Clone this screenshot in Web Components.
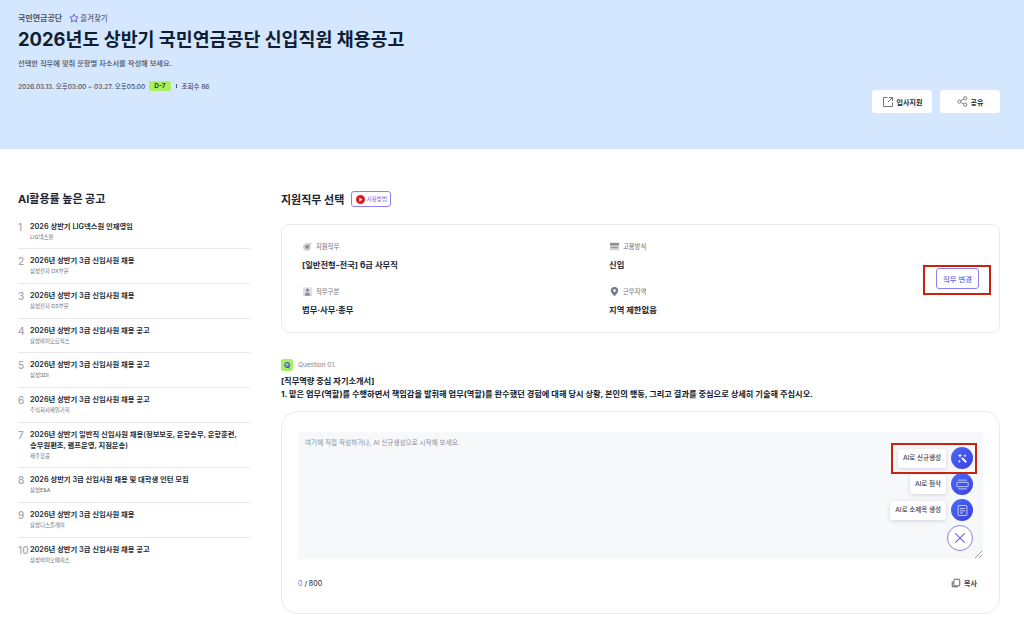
<!DOCTYPE html>
<html lang="ko">
<head>
<meta charset="utf-8">
<title>지원직무 선택</title>
<style>
  html, body { margin: 0; background: #fff; overflow: hidden; }
  body { font-family: Inter, "Noto Sans CJK KR", sans-serif; color: #1b2533; }
  .page { display: flex; gap: 31px; padding: 0 24px 0 18px; }
</style>
</head>
<body>
<job-hero></job-hero>
<div class="page">
  <rank-list title="AI활용률 높은 공고">
    <rank-item no="1" title="2026 상반기 LIG넥스원 인재영입" sub="LIG넥스원"></rank-item>
    <rank-item no="2" title="2026년 상반기 3급 신입사원 채용" sub="삼성전자 DX부문"></rank-item>
    <rank-item no="3" title="2026년 상반기 3급 신입사원 채용" sub="삼성전자 DS부문"></rank-item>
    <rank-item no="4" title="2026년 상반기 3급 신입사원 채용 공고" sub="삼성바이오로직스"></rank-item>
    <rank-item no="5" title="2026년 상반기 3급 신입사원 채용 공고" sub="삼성SDI"></rank-item>
    <rank-item no="6" title="2026년 상반기 3급 신입사원 채용 공고" sub="주식회사제일기획"></rank-item>
    <rank-item no="7" title="2026년 상반기 일반직 신입사원 채용(정보보호, 운항승무, 운항훈련, 승무원편조, 램프운영, 지점운송)" sub="제주항공"></rank-item>
    <rank-item no="8" title="2026 상반기 3급 신입사원 채용 및 대학생 인턴 모집" sub="삼성E&amp;A"></rank-item>
    <rank-item no="9" title="2026년 상반기 3급 신입사원 채용" sub="삼성디스플레이"></rank-item>
    <rank-item no="10" title="2026년 상반기 3급 신입사원 채용 공고" sub="삼성바이오에피스" last></rank-item>
  </rank-list>
  <main style="flex:1;min-width:0;display:block">
    <job-select></job-select>
    <question-card></question-card>
  </main>
</div>

<script>
// --- hero at the top of the page ---
class JobHero extends HTMLElement {
  constructor() {
    super();
    this.attachShadow({ mode: 'open' });
    this.shadowRoot.innerHTML = `
      <style>
        :host { display: flex; justify-content: space-between; align-items: flex-end; height: 149px; box-sizing: border-box; padding: 11px 24px 36px 18px; background: #d5e6ff; }
        .left { align-self: flex-start; }
        .org { display: flex; align-items: center; height: 13px; font-size: 8px; font-weight: 600; color: #4a5260; }
        .fav { display: flex; align-items: center; gap: 1px; margin-left: 7px; font-size: 7.5px; font-weight: 500; color: #5b6370; }
        h1 { margin: 1px 0 0; font-size: 18.4px; line-height: 28px; font-weight: 700; color: #0f1f33; }
        p { margin: 5px 0 0; font-size: 7.25px; line-height: 12px; font-weight: 500; color: #4a5260; }
        .meta { display: flex; align-items: center; margin-top: 10px; height: 12px; font-size: 6.5px; font-weight: 500; color: #4a5260; }
        .d { margin-left: 4px; padding: 0 5px; height: 10px; line-height: 10px; border-radius: 2px; background: #a9f060; color: #2a4a12; font-weight: 700; font-size: 6.5px; }
        .sep { width: 1px; height: 4px; background: #555; margin: 0 5px; }
        .btns { display: flex; gap: 8px; }
        button { all: unset; box-sizing: border-box; width: 60px; height: 23px; display: flex; align-items: center; justify-content: center; gap: 3px; background: #fff; border-radius: 3px; font-size: 7px; font-weight: 700; color: #222a36; }
        svg { display: block; }
      </style>
      <div class="left">
        <div class="org">국민연금공단
          <span class="fav">
            <svg width="10" height="10" viewBox="0 0 24 24" fill="none" stroke="#6a5cf0" stroke-width="2.4" stroke-linejoin="round"><path d="M12 2.5l3 6.4 7 .9-5.2 4.8 1.4 7-6.2-3.5-6.2 3.5 1.4-7L2 9.8l7-.9z"/></svg>
            즐겨찾기
          </span>
        </div>
        <h1>2026년도 상반기 국민연금공단 신입직원 채용공고</h1>
        <p>선택한 직무에 맞춰 문항별 자소서를 작성해 보세요.</p>
        <div class="meta">2026.03.13. 오후03:00 ~ 03.27. 오후05:00<span class="d">D-7</span><span class="sep"></span>조회수 86</div>
      </div>
      <div class="btns">
        <button>
          <svg width="12" height="12" viewBox="0 0 24 24" fill="none" stroke="#666" stroke-width="1.8"><path d="M11 3H3v18h18v-8"/><path d="M14 3h7v7M21 3l-9 9"/></svg>
          입사지원
        </button>
        <button>
          <svg width="11" height="11" viewBox="0 0 24 24" fill="none" stroke="#666" stroke-width="1.8"><circle cx="5" cy="12" r="3.5"/><circle cx="18" cy="5" r="3.5"/><circle cx="18" cy="19" r="3.5"/><path d="M8 10.3l7-3.8M8 13.7l7 3.8"/></svg>
          공유
        </button>
      </div>`;
  }
}
customElements.define('job-hero', JobHero);

// --- left column ---
class RankList extends HTMLElement {
  constructor() {
    super();
    this.attachShadow({ mode: 'open' });
  }
  connectedCallback() {
    this.shadowRoot.innerHTML = `
      <style>
        :host { display: block; width: 232px; flex: none; padding-top: 41px; }
        h2 { margin: 0 0 6.5px; font-size: 11px; line-height: 18px; font-weight: 700; color: #1b2533; }
      </style>
      <h2>${this.getAttribute('title')}</h2>
      <slot></slot>`;
  }
}
customElements.define('rank-list', RankList);

class RankItem extends HTMLElement {
  constructor() {
    super();
    this.attachShadow({ mode: 'open' });
  }
  connectedCallback() {
    const title = this.getAttribute('title');
    const sub = this.getAttribute('sub');
    this.shadowRoot.innerHTML = `
      <style>
        :host { display: flex; box-sizing: border-box; padding: 4px 0 5.7px; border-bottom: 1px solid #e6e8f0; }
        :host([last]) { border-bottom: 0; }
        .no { width: 12px; flex: none; font-size: 10px; line-height: 16px; color: #a4a8b0; font-weight: 500; white-space: nowrap; }
        .t { font-size: 7.3px; line-height: 11px; padding: 2px 0 0; font-weight: 600; color: #222a36; word-break: keep-all; }
        .s { font-size: 5.4px; line-height: 11px; color: #6a7078; }
      </style>
      <span class="no">${this.getAttribute('no')}</span>
      <div><div class="t">${title}</div><div class="s">${sub}</div></div>`;
  }
}
customElements.define('rank-item', RankItem);

// --- selected job card ---
const JOB_ICONS = {
  target: '<circle cx="11" cy="13" r="9" fill="#d5d7dd"/><circle cx="11" cy="13" r="4.5" fill="#8a8f9a"/><path d="M13 11l7-7" stroke="#8a8f9a" stroke-width="2"/>',
  cal: '<rect x="2" y="4" width="20" height="6" fill="#8a8f9a"/><rect x="2" y="11" width="20" height="9" fill="#c9ccd4"/><rect x="5" y="13" width="14" height="2" fill="#8a8f9a"/>',
  person: '<rect x="2" y="3" width="20" height="19" fill="#dfe1e7"/><circle cx="12" cy="9" r="3.5" fill="#8a8f9a"/><path d="M6 21c0-5 3-7 6-7s6 2 6 7z" fill="#8a8f9a"/>',
  pin: '<path d="M12 2a8 8 0 0 0-8 8c0 5.5 8 12.5 8 12.5s8-7 8-12.5a8 8 0 0 0-8-8z" fill="#777c86"/><circle cx="12" cy="10" r="3" fill="#fff"/>'
};

class JobField extends HTMLElement {
  constructor() {
    super();
    this.attachShadow({ mode: 'open' });
  }
  connectedCallback() {
    this.shadowRoot.innerHTML = `
      <style>
        :host { display: block; }
        .l { display: flex; align-items: center; gap: 3px; height: 12px; font-size: 6.3px; font-weight: 500; color: #7c818a; }
        .v { margin-top: 7px; font-size: 8.3px; line-height: 12px; font-weight: 700; color: #1b2533; }
        svg { display: block; }
      </style>
      <div class="l"><svg width="11" height="11" viewBox="0 0 24 24">${JOB_ICONS[this.getAttribute('icon')]}</svg>${this.getAttribute('label')}</div>
      <div class="v">${this.getAttribute('value')}</div>`;
  }
}
customElements.define('job-field', JobField);

class JobSelect extends HTMLElement {
  constructor() {
    super();
    this.attachShadow({ mode: 'open' });
    this.shadowRoot.innerHTML = `
      <style>
        :host { display: block; padding-top: 41px; }
        .head { display: flex; align-items: center; gap: 7px; height: 18px; }
        h2 { margin: 0; font-size: 11px; font-weight: 700; color: #1b2533; }
        .how { display: flex; align-items: center; gap: 2px; box-sizing: border-box; width: 40px; height: 16px; justify-content: center; border: 1px solid #8d7ff5; border-radius: 3px; font-size: 5.5px; color: #6a5cf0; }
        .card { position: relative; display: grid; grid-template-columns: 307px 1fr; row-gap: 14px; align-content: start; box-sizing: border-box; height: 109px; margin-top: 16px; padding: 15px 20px; border: 1px solid #e9ebf3; border-radius: 8px; background: #fff; }
        .change { position: absolute; left: 654px; top: 43px; box-sizing: border-box; width: 43px; height: 21px; display: flex; align-items: center; justify-content: center; border: 1px solid #8d7ff5; border-radius: 3px; background: #fff; font-size: 7.3px; color: #6a5cf0; font-weight: 500; }
        .mark { position: absolute; left: 641px; top: 40px; box-sizing: border-box; width: 68px; height: 30px; border: 2px solid #c8230f; }
        svg { display: block; }
      </style>
      <div class="head">
        <h2>지원직무 선택</h2>
        <span class="how">
          <svg width="9" height="9" viewBox="0 0 24 24"><circle cx="12" cy="12" r="12" fill="#e01b24"/><path d="M9 7l8 5-8 5z" fill="#fff"/></svg>
          사용방법
        </span>
      </div>
      <div class="card">
        <job-field icon="target" label="지원직무" value="[일반전형-전국] 6급 사무직"></job-field>
        <job-field icon="cal" label="고용방식" value="신입"></job-field>
        <job-field icon="person" label="직무구분" value="법무·사무·총무"></job-field>
        <job-field icon="pin" label="근무지역" value="지역 제한없음"></job-field>
        <span class="change">직무 변경</span>
        <span class="mark"></span>
      </div>`;
  }
}
customElements.define('job-select', JobSelect);

// --- floating AI action ---
class AiAction extends HTMLElement {
  constructor() {
    super();
    this.attachShadow({ mode: 'open' });
  }
  connectedCallback() {
    const icons = {
      wand: '<path d="M11 11l7 7" stroke="#fff" stroke-width="3"/><path d="M8 4l1 2.500 2.500 1-2.500 1-1 2.500-1-2.500-2.500-1 2.500-1zM16 5l.8 1.700 1.700.8-1.700.8-.8 1.700-.8-1.700-1.700-.8 1.700-.8zM7 14l.8 1.700 1.700.8-1.700.8-.8 1.700-.8-1.700-1.700-.8 1.700-.8z" fill="#fff"/>',
      form: '<path d="M5 5h14M5 19h14" stroke="#dfe3ff" stroke-width="1.300"/><rect x="3" y="8.500" width="18" height="7" rx=".5" fill="none" stroke="#dfe3ff" stroke-width="1.300"/>',
      doc: '<rect x="5" y="4" width="14" height="16" rx="1" fill="none" stroke="#dfe3ff" stroke-width="1.300"/><path d="M8 9h8M8 12.500h8M8 16h5" stroke="#dfe3ff" stroke-width="1.300"/>'
    };
    this.shadowRoot.innerHTML = `
      <style>
        :host { display: flex; align-items: center; justify-content: flex-end; gap: 5px; }
        .label { display: flex; align-items: center; height: 19px; padding: 0 5px; border-radius: 3px; background: #fff; box-shadow: 0 1px 4px rgba(40,50,90,.18); font-size: 6.500px; font-weight: 500; color: #3a424e; white-space: nowrap; }
        .dot { width: 22px; height: 22px; border-radius: 50%; background: linear-gradient(135deg, #4a6cf5, #3b3fe0); display: flex; align-items: center; justify-content: center; }
        svg { display: block; }
      </style>
      <span class="label">${this.getAttribute('label')}</span>
      <span class="dot"><svg width="15" height="15" viewBox="0 0 24 24">${icons[this.getAttribute('icon')]}</svg></span>`;
  }
}
customElements.define('ai-action', AiAction);

// --- question and answer box ---
class QuestionCard extends HTMLElement {
  constructor() {
    super();
    this.attachShadow({ mode: 'open' });
    this.shadowRoot.innerHTML = `
      <style>
        :host { display: block; padding-top: 25px; }
        .q { display: flex; align-items: center; gap: 5px; height: 13px; font-size: 6.500px; color: #7c818a; }
        .q b { width: 12px; height: 12px; border-radius: 2px; background: #a9f060; color: #3f51e0; display: flex; align-items: center; justify-content: center; font-size: 8px; }
        .text { margin-top: 4px; font-size: 8.230px; line-height: 13px; font-weight: 700; color: #10192a; }
        .box { box-sizing: border-box; height: 203px; margin-top: 10px; padding: 20px 16px 0 16px; border: 1px solid #e9ebf3; border-radius: 16px; }
        .area { position: relative; height: 127px; background: #f7f8fa; padding: 7px; box-sizing: border-box; font-size: 6.600px; line-height: 9px; color: #8b9099; }
        .actions { position: absolute; right: 10px; top: 15px; display: grid; gap: 4px; }
        .close { position: absolute; right: 10px; top: 93px; box-sizing: border-box; width: 26px; height: 26px; border: 1px solid #8d7ff5; border-radius: 50%; background: #fff; }
        .close svg { display: block; margin: 5px; }
        .grip { position: absolute; right: 1px; bottom: 1px; }
        .mark { position: absolute; left: 593px; top: 11px; box-sizing: border-box; width: 86px; height: 31px; border: 2px solid #c8230f; }
        .foot { display: flex; justify-content: space-between; align-items: center; margin-top: 18px; padding-right: 6px; height: 12px; font-size: 7px; color: #3a424e; font-weight: 500; }
        .foot em { font-style: normal; color: #8d7ff5; }
        .copy { display: flex; align-items: center; gap: 3px; font-weight: 600; }
      </style>
      <div class="q"><b>Q</b>Question 01.</div>
      <div class="text">[직무역량 중심 자기소개서]<br>1. 맡은 업무(역할)를 수행하면서 책임감을 발휘해 업무(역할)를 완수했던 경험에 대해 당시 상황, 본인의 행동, 그리고 결과를 중심으로 상세히 기술해 주십시오.</div>
      <div class="box">
        <div class="area">
          여기에 직접 작성하거나, AI 신규생성으로 시작해 보세요.
          <div class="actions">
            <ai-action label="AI로 신규생성" icon="wand"></ai-action>
            <ai-action label="AI로 첨삭" icon="form"></ai-action>
            <ai-action label="AI로 소제목 생성" icon="doc"></ai-action>
          </div>
          <span class="close"><svg width="14" height="14" viewBox="0 0 24 24" stroke="#6a5cf0" stroke-width="1.800"><path d="M4 4l16 16M20 4L4 20"/></svg></span>
          <svg class="grip" width="7" height="7" viewBox="0 0 7 7" stroke="#9a9ea6"><path d="M0 7l7-7M4 7l3-3"/></svg>
          <span class="mark"></span>
        </div>
        <div class="foot">
          <span><em>0</em> / 800</span>
          <span class="copy">
            <svg width="10" height="10" viewBox="0 0 24 24" fill="none" stroke="#3a424e" stroke-width="2"><rect x="7" y="3" width="14" height="16" rx="2"/><path d="M3 8v13h13"/></svg>
            복사
          </span>
        </div>
      </div>`;
  }
}
customElements.define('question-card', QuestionCard);
</script>
</body>
</html>
